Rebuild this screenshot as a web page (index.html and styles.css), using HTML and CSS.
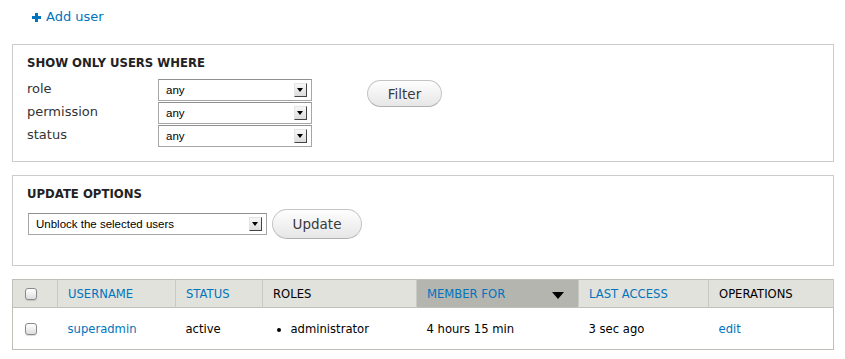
FILE: index.html
```html
<!DOCTYPE html>
<html lang="en">
<head>
    <meta charset="UTF-8">
    <meta name="viewport" content="width=device-width, initial-scale=1.0">
    <title>People</title>
    <link rel="stylesheet" href="styles.css">
</head>
<body>
    <ul class="action-links">
        <li><a href="#" class="add-link"><span class="plus"></span>Add user</a></li>
    </ul>

    <section class="panel filter-panel">
        <h2>Show only users where</h2>
        <div class="filter-body">
            <div class="filter-rows">
                <label>role</label>
                <div class="select"><span>any</span><i class="arrow"></i></div>
                <label>permission</label>
                <div class="select"><span>any</span><i class="arrow"></i></div>
                <label>status</label>
                <div class="select"><span>any</span><i class="arrow"></i></div>
            </div>
            <button class="btn filter-btn">Filter</button>
        </div>
    </section>

    <section class="panel update-panel">
        <h2>Update options</h2>
        <div class="update-row">
            <div class="select wide"><span>Unblock the selected users</span><i class="arrow"></i></div>
            <button class="btn update-btn">Update</button>
        </div>
    </section>

    <table class="users">
        <colgroup>
            <col class="c-check">
            <col class="c-name">
            <col class="c-status">
            <col class="c-roles">
            <col class="c-member">
            <col class="c-access">
            <col>
        </colgroup>
        <thead>
            <tr>
                <th class="col-check"><input type="checkbox"></th>
                <th><a href="#">Username</a></th>
                <th><a href="#">Status</a></th>
                <th>Roles</th>
                <th class="active"><a href="#">Member for</a><span class="sort-arrow"></span></th>
                <th><a href="#">Last access</a></th>
                <th>Operations</th>
            </tr>
        </thead>
        <tbody>
            <tr>
                <td class="col-check"><input type="checkbox"></td>
                <td><a href="#">superadmin</a></td>
                <td>active</td>
                <td><ul class="roles"><li>administrator</li></ul></td>
                <td>4 hours 15 min</td>
                <td>3 sec ago</td>
                <td><a href="#">edit</a></td>
            </tr>
        </tbody>
    </table>
</body>
</html>
```

FILE: styles.css
```css
body {
    margin: 0;
    padding: 0 11px 0 12px;
    font-family: 'DejaVu Sans', sans-serif;
    font-size: 13px;
    color: #333;
    background-color: #fff;
}
a {
    color: #0074bd;
    text-decoration: none;
}
.action-links {
    margin: 0;
    padding: 8px 0 18px 20px;
    list-style: none;
    line-height: 18px;
}
.plus {
    display: inline-block;
    width: 9px;
    height: 9px;
    margin-right: 5px;
    vertical-align: -1px;
    background:
        linear-gradient(#0074bd, #0074bd) center / 9px 3px no-repeat,
        linear-gradient(#0074bd, #0074bd) center / 3px 9px no-repeat;
}
.panel {
    border: 1px solid #ccc;
    padding: 9px 14px 14px;
    margin-bottom: 13px;
}
.panel h2 {
    margin: 0 0 6px;
    font-size: 11.7px;
    font-weight: bold;
    line-height: 18px;
    text-transform: uppercase;
    color: #222;
}
.update-panel {
    padding-bottom: 26px;
}
.filter-body {
    display: flex;
    align-items: flex-start;
}
.filter-rows {
    display: grid;
    grid-template-columns: 131px 154px;
    grid-auto-rows: 23px;
    align-items: center;
}
.filter-rows label {
    line-height: 18px;
    margin-top: -2px;
}
.select {
    display: flex;
    align-items: center;
    justify-content: space-between;
    box-sizing: border-box;
    height: 22px;
    padding: 0 4px 0 7px;
    border: 1px solid #a6a6a6;
    border-top-color: #8f8f8f;
    background-color: #fff;
    font-family: 'Liberation Sans', Arial, sans-serif;
    font-size: 11.5px;
    color: #000;
}
.select.wide {
    width: 239px;
    margin-left: 1px;
}
.arrow {
    position: relative;
    width: 11px;
    height: 12px;
    border: 1px solid #e4e4e4;
    border-right-color: #444;
    border-bottom-color: #444;
    background: linear-gradient(#f7f7f7, #dcdcdc);
}
.arrow::after {
    content: '';
    position: absolute;
    left: 2px;
    top: 4px;
    border-left: 3.5px solid transparent;
    border-right: 3.5px solid transparent;
    border-top: 4px solid #000;
}
.btn {
    box-sizing: border-box;
    border: 1px solid #c4c4c4;
    border-bottom-color: #b0b0b0;
    border-radius: 15px;
    background: linear-gradient(#fefefe, #e6e6e6);
    font-family: 'DejaVu Sans', sans-serif;
    font-size: 13.5px;
    color: #3a3a3a;
    cursor: pointer;
    padding: 0;
}
.filter-btn {
    width: 75px;
    height: 27px;
    margin: 2px 0 0 55px;
}
.update-row {
    display: flex;
    align-items: center;
}
.update-btn {
    width: 90px;
    height: 30px;
    margin-left: 5px;
}
.users {
    width: 100%;
    table-layout: fixed;
    border-collapse: collapse;
    border: 1px solid #bebfb9;
    font-size: 11.6px;
    color: #000;
}
.c-check { width: 45px; }
.c-name { width: 118px; }
.c-status { width: 87px; }
.c-roles { width: 154px; }
.c-member { width: 162px; }
.c-access { width: 130px; }
.users th {
    height: 27px;
    padding: 0 10px;
    background-color: #e1e2dc;
    border-right: 1px solid #c9cac4;
    text-align: left;
    font-weight: normal;
    text-transform: uppercase;
    white-space: nowrap;
}
.users th.active {
    background-color: #b4b5af;
}
.users td {
    height: 41px;
    padding: 0 10px;
    border-top: 1px solid #bebfb9;
    white-space: nowrap;
}
.users .col-check {
    padding-left: 12px;
}
.sort-arrow {
    float: right;
    margin: 5px 4px 0 0;
    border-left: 6px solid transparent;
    border-right: 6px solid transparent;
    border-top: 7px solid #000;
}
input[type="checkbox"] {
    appearance: none;
    -webkit-appearance: none;
    display: block;
    margin: 0;
    width: 12px;
    height: 12px;
    border: 1px solid #8a8a8a;
    border-radius: 3px;
    background: linear-gradient(#fff, #dedede);
    box-shadow: 0 1px 1px rgba(0, 0, 0, 0.15);
}
.roles {
    margin: 0;
    padding-left: 18px;
    list-style: disc;
}
```
